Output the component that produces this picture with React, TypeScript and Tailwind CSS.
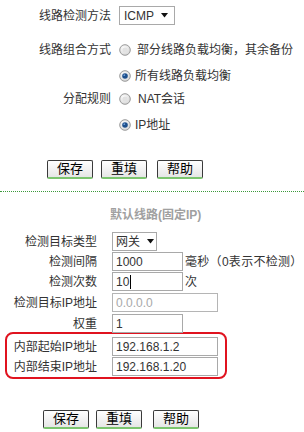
const font = { fontFamily: '"Liberation Sans", "Noto Sans CJK SC", sans-serif' };

function Radio({ checked }: { checked?: boolean }) {
  return (
    <svg width="12" height="12" viewBox="0 0 12 12" className="block flex-none">
      <defs>
        <radialGradient id={checked ? 'rg-on' : 'rg-off'} cx="40%" cy="35%" r="70%">
          <stop offset="0%" stopColor="#ffffff" />
          <stop offset="100%" stopColor="#d4d4d4" />
        </radialGradient>
      </defs>
      <circle cx="6" cy="6" r="5.3" fill={`url(#${checked ? 'rg-on' : 'rg-off'})`} stroke="#9a9a9a" strokeWidth="1" />
      {checked ? <circle cx="6" cy="6" r="2.8" fill="#1d4f8c" /> : <circle cx="6" cy="6" r="2.6" fill="#e2e2e2" />}
      {checked && <circle cx="5.3" cy="5.2" r="0.9" fill="#6f9fd8" />}
    </svg>
  );
}

function Select({ value, width, pl = 'pl-[4px]', pr = 'pr-[6px]' }: { value: string; width: string; pl?: string; pr?: string }) {
  return (
    <div className={`flex h-[19px] ${width} items-center justify-between border border-[#a9a9a9] bg-white ${pl} ${pr} text-[12px] text-[#333]`}>
      <span>{value}</span>
      <svg width="7" height="5" viewBox="0 0 7 5">
        <path d="M0 0 H7 L3.5 4.5 Z" fill="#111" />
      </svg>
    </div>
  );
}

function Input({ value, width, disabled, cursor }: { value: string; width: string; disabled?: boolean; cursor?: boolean }) {
  return (
    <div
      className={`flex h-[19px] ${width} items-center border ${disabled ? 'border-[#b5b5b5] text-[#a8a8a8]' : 'border-[#a9a9a9] text-[#333]'} bg-white pl-[3px] text-[12px]`}
    >
      <span>{value}</span>
      {cursor && <span className="ml-px h-[14px] w-px bg-black" />}
    </div>
  );
}

function Button({ label, className = '' }: { label: string; className?: string }) {
  return (
    <div
      className={`flex h-[19px] w-[46px] items-center justify-center rounded-[2px] border border-[#3a3a3a] border-b-[2px] border-b-[#7cc56f] bg-gradient-to-b from-white to-[#e6e6e6] text-[13px] text-black ${className}`}
    >
      {label}
    </div>
  );
}

function Row({ label, children, mt = '', labelW = 'w-[97px]' }: { label: string; children: React.ReactNode; mt?: string; labelW?: string }) {
  return (
    <div className={`flex h-[19px] items-center ${mt}`}>
      <div className={`${labelW} flex-none text-right text-[12px] text-[#333]`}>{label}</div>
      <div className="ml-[15px] flex items-center">{children}</div>
    </div>
  );
}

export default function App() {
  return (
    <div className="h-[432px] w-[304px] overflow-hidden bg-white" style={font}>
      {/* upper form */}
      <div className="pt-[6px]">
        <div className="flex h-[19px] items-center">
          <div className="w-[111px] flex-none text-right text-[12px] text-[#333]">线路检测方法</div>
          <div className="ml-[8px]">
            <Select value="ICMP" width="w-[56px]" />
          </div>
        </div>

        <div className="mt-[15px] flex h-[20px] items-center">
          <div className="w-[111px] flex-none text-right text-[12px] text-[#333]">线路组合方式</div>
          <div className="ml-[8px] flex items-center">
            <Radio />
            <span className="ml-[6px] text-[12px] text-[#333]">部分线路负载均衡，其余备份</span>
          </div>
        </div>

        <div className="mt-[6px] flex h-[20px] items-center pl-[119px]">
          <Radio checked />
          <span className="ml-[4px] text-[12px] text-[#333]">所有线路负载均衡</span>
        </div>

        <div className="mt-[3px] flex h-[20px] items-center">
          <div className="w-[111px] flex-none text-right text-[12px] text-[#333]">分配规则</div>
          <div className="ml-[8px] flex items-center">
            <Radio />
            <span className="ml-[7px] text-[12px] text-[#333]">NAT会话</span>
          </div>
        </div>

        <div className="mt-[6px] flex h-[20px] items-center pl-[119px]">
          <Radio checked />
          <span className="ml-[4px] text-[12px] text-[#333]">IP地址</span>
        </div>

        <div className="mt-[25px] flex pl-[47px]">
          <Button label="保存" />
          <Button label="重填" className="ml-[8px]" />
          <Button label="帮助" className="ml-[10px]" />
        </div>
      </div>

      <div className="mt-[12px] border-t border-dotted border-[#3c9a3c]" />

      {/* line settings */}
      <div className="mt-[15px] h-[16px] pl-[110px] text-[12px] font-bold leading-[16px] text-[#a0a0a0]">默认线路(固定IP)</div>

      <Row label="检测目标类型" mt="mt-[9px]">
        <Select value="网关" width="w-[45px]" pl="pl-[3px]" pr="pr-[2px]" />
      </Row>
      <Row label="检测间隔" mt="mt-px">
        <Input value="1000" width="w-[71px]" />
        <span className="ml-[2px] whitespace-nowrap text-[12px] tracking-[0.3px] text-[#333]">毫秒（0表示不检测）</span>
      </Row>
      <Row label="检测次数" mt="mt-px">
        <Input value="10" width="w-[71px]" cursor />
        <span className="ml-[2px] text-[12px] text-[#333]">次</span>
      </Row>
      <Row label="检测目标IP地址" mt="mt-[2px]">
        <Input value="0.0.0.0" width="w-[106px]" disabled />
      </Row>
      <Row label="权重" mt="mt-[2px]">
        <Input value="1" width="w-[71px]" />
      </Row>

      <div className="ml-[5px] mt-[-1px] w-[222px] rounded-[8px] border-2 border-[#e0131f] pb-[1px] pt-[3px]">
        <Row label="内部起始IP地址" labelW="w-[90px]">
          <Input value="192.168.1.2" width="w-[106px]" />
        </Row>
        <Row label="内部结束IP地址" labelW="w-[90px]" mt="mt-px">
          <Input value="192.168.1.20" width="w-[106px]" />
        </Row>
      </div>

      <div className="mt-[31px] flex pl-[43px]">
        <Button label="保存" />
        <Button label="重填" className="ml-[7px]" />
        <Button label="帮助" className="ml-[11px]" />
      </div>
    </div>
  );
}
